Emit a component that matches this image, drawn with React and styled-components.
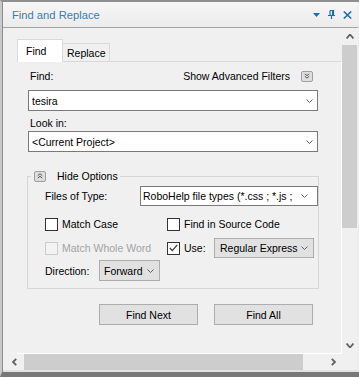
import React from 'react';
import styled, { createGlobalStyle } from 'styled-components';

const GlobalStyle = createGlobalStyle`
  html, body { margin: 0; padding: 0; }
  body {
    font-family: "Liberation Sans", Arial, sans-serif;
    font-size: 10.5px;
    color: #000;
    background: #fff;
  }
`;

const Window = styled.div`
  width: 359px;
  height: 377px;
  box-sizing: border-box;
  display: flex;
  flex-direction: column;
  background: #f0f0f0;
  border-top: 2px solid #8e8e8e;
  border-left: 2px solid #c9c9c9;
  border-bottom: 5px solid #787878;
  overflow: hidden;
`;

const Frame = styled.div`
  flex: 1;
  min-height: 0;
  display: flex;
  flex-direction: column;
  border-left: 1px solid #8c8c8c;
  border-right: 1px solid #ececec;
`;

const TitleBar = styled.div`
  height: 25px;
  flex: none;
  display: flex;
  align-items: center;
  padding: 0 6px 0 9px;
  background: linear-gradient(#f7f7f7, #ebebeb);
  border-bottom: 1px solid #a3a3a3;
`;

const Title = styled.div`
  flex: 1;
  font-size: 11.2px;
  color: #3a7cb2;
`;

const TitleIcons = styled.div`
  display: flex;
  align-items: center;
  gap: 8px;
`;

const Body = styled.div`
  flex: 1;
  min-height: 0;
  display: flex;
`;

const Viewport = styled.div`
  flex: 1;
  min-width: 0;
  display: flex;
  flex-direction: column;
  padding: 11px 0 0 14px;
  overflow: hidden;
`;

const Tabs = styled.div`
  display: flex;
  align-items: flex-end;
  position: relative;
  z-index: 1;
`;

const Tab = styled.div`
  box-sizing: border-box;
  width: ${p => (p.$active ? 46 : 47)}px;
  height: ${p => (p.$active ? 23 : 18)}px;
  margin-bottom: ${p => (p.$active ? -1 : 0)}px;
  display: flex;
  align-items: center;
  padding-left: ${p => (p.$active ? 8 : 4)}px;
  background: ${p => (p.$active ? '#fff' : '#f0f0f0')};
  border: 1px solid #d9d9d9;
  border-bottom: none;
  ${p => !p.$active && 'border-left: none;'}
`;

const Panel = styled.div`
  flex: 1;
  display: flex;
  flex-direction: column;
  padding: 6px 23px 0 11px;
  border-top: 1px solid #d9d9d9;
  border-right: 1px solid #fff;
  border-bottom: 1px solid #fff;
`;

const LabelRow = styled.div`
  height: 16px;
  margin-top: ${p => p.$gap || 0}px;
  display: flex;
  align-items: center;
  padding-left: 2px;
`;

const Spacer = styled.div`
  flex: 1;
`;

const AdvancedLabel = styled.span`
  margin-right: 11px;
`;

const MiniToggle = styled.div`
  box-sizing: border-box;
  width: 12px;
  height: 11px;
  margin-right: ${p => p.$right || 0}px;
  display: flex;
  align-items: center;
  justify-content: center;
  background: #dedede;
  border: 1px solid #9f9f9f;
  border-radius: 2px;
`;

const Combo = styled.div`
  box-sizing: border-box;
  width: ${p => p.$width}px;
  height: ${p => p.$height || 21}px;
  margin-top: ${p => p.$gap || 0}px;
  flex: none;
  display: flex;
  align-items: center;
  padding-left: ${p => p.$pad || 3}px;
  padding-right: ${p => p.$chevronGap || 4}px;
  background: ${p => (p.$flat ? '#e1e1e1' : '#fff')};
  border: 1px solid ${p => (p.$flat ? '#adadad' : '#7a7a7a')};
`;

const ComboText = styled.span`
  flex: 1;
  min-width: 0;
  overflow: hidden;
  white-space: nowrap;
`;

const Group = styled.fieldset`
  box-sizing: border-box;
  width: 292px;
  margin: 18px 0 0 -1px;
  padding: 4px 0 7px 3px;
  min-inline-size: 0;
  border: 1px solid #d6d6d6;
`;

const Legend = styled.legend`
  display: flex;
  align-items: center;
  gap: 11px;
  height: 12px;
  padding: 0 2px 0 3px;
`;

const GroupBody = styled.div`
  padding-left: 14px;
  display: flex;
  flex-direction: column;
`;

const OptionRow = styled.div`
  height: ${p => p.$height || 20}px;
  margin-top: ${p => p.$gap || 0}px;
  display: flex;
  align-items: center;
`;

const FieldLabel = styled.span`
  width: ${p => p.$width}px;
  flex: none;
  color: ${p => (p.$disabled ? '#a3a3a3' : '#000')};
`;

const CheckCell = styled.label`
  width: ${p => p.$width || 'auto'};
  flex: none;
  display: flex;
  align-items: center;
  gap: 4px;
  color: ${p => (p.$disabled ? '#a3a3a3' : '#000')};
`;

const Box = styled.span`
  box-sizing: border-box;
  width: 13px;
  height: 13px;
  flex: none;
  display: flex;
  align-items: center;
  justify-content: center;
  background: ${p => (p.$disabled ? '#f3f3f3' : '#fff')};
  border: 1px solid ${p => (p.$disabled ? '#cccccc' : '#333')};
`;

const Buttons = styled.div`
  display: flex;
  gap: 16px;
  margin-top: 15px;
  padding-left: 71px;
`;

const Button = styled.div`
  box-sizing: border-box;
  width: 99px;
  height: 21px;
  display: flex;
  align-items: center;
  justify-content: center;
  background: #e1e1e1;
  border: 1px solid #adadad;
`;

const VScroll = styled.div`
  width: 16px;
  flex: none;
  display: flex;
  flex-direction: column;
  background: #f0f0f0;
`;

const ScrollButton = styled.div`
  width: ${p => p.$w || 16}px;
  height: ${p => p.$h || 16}px;
  flex: none;
  display: flex;
  align-items: center;
  justify-content: center;
  padding-left: ${p => p.$shift || 0}px;
  box-sizing: border-box;
`;

const VThumb = styled.div`
  height: 183px;
  margin-right: 1px;
  background: #cdcdcd;
`;

const Track = styled.div`
  flex: 1;
`;

const HScrollRow = styled.div`
  height: 16px;
  flex: none;
  display: flex;
  border-bottom: 2px solid #e2e2e2;
`;

const HScroll = styled.div`
  flex: 1;
  display: flex;
`;

const HThumb = styled.div`
  width: 279px;
  background: #cdcdcd;
`;

const Corner = styled.div`
  width: 16px;
`;

const Chevron = ({ dir = 'down', color = '#606060', w = 7, h = 4, sw = 1 }) => {
  const paths = {
    down: `M0.5 0.5L${w / 2} ${h - 0.5}L${w - 0.5} 0.5`,
    up: `M0.5 ${h - 0.5}L${w / 2} 0.5L${w - 0.5} ${h - 0.5}`,
  };
  return (
    <svg width={w} height={h} viewBox={`0 0 ${w} ${h}`}>
      <path d={paths[dir]} fill="none" stroke={color} strokeWidth={sw} />
    </svg>
  );
};

const SideChevron = ({ dir }) => (
  <svg width="5" height="8" viewBox="0 0 5 8">
    <path
      d={dir === 'left' ? 'M4.2 0.8L1 4L4.2 7.2' : 'M0.8 0.8L4 4L0.8 7.2'}
      fill="none"
      stroke="#606060"
      strokeWidth="1.8"
    />
  </svg>
);

const DoubleChevron = ({ dir }) => (
  <svg width="6" height="6" viewBox="0 0 6 6">
    {dir === 'down' ? (
      <path d="M0.8 0.8L3 2.6L5.2 0.8M0.8 3.3L3 5.1L5.2 3.3" fill="none" stroke="#555" strokeWidth="1" />
    ) : (
      <path d="M0.8 2.6L3 0.8L5.2 2.6M0.8 5.1L3 3.3L5.2 5.1" fill="none" stroke="#555" strokeWidth="1" />
    )}
  </svg>
);

const Check = () => (
  <svg width="9" height="8" viewBox="0 0 9 8">
    <path d="M0.8 4L3.3 6.6L8.3 0.8" fill="none" stroke="#333" strokeWidth="1.2" />
  </svg>
);

const DropIcon = () => (
  <svg width="7" height="4" viewBox="0 0 7 4">
    <path d="M0 0H7L3.5 4Z" fill="#236ea8" />
  </svg>
);

const PinIcon = () => (
  <svg width="7" height="9" viewBox="0 0 7 9">
    <path d="M2 0.5H5.5V5.5M2 0.5V5.5M0 5.5H7M3.5 5.5V9" fill="none" stroke="#236ea8" strokeWidth="1.2" />
    <path d="M4.6 0.5V5.5" stroke="#236ea8" strokeWidth="1.4" />
  </svg>
);

const CloseIcon = () => (
  <svg width="9" height="8" viewBox="0 0 9 8">
    <path d="M0.8 0.5L8.2 7.5M8.2 0.5L0.8 7.5" fill="none" stroke="#236ea8" strokeWidth="1.6" />
  </svg>
);

const Select = ({ children, ...rest }) => (
  <Combo {...rest}>
    <ComboText>{children}</ComboText>
    <Chevron />
  </Combo>
);

const Checkbox = ({ checked, disabled, width, children }) => (
  <CheckCell $width={width} $disabled={disabled}>
    <Box $disabled={disabled}>{checked && <Check />}</Box>
    {children}
  </CheckCell>
);

export default function App() {
  return (
    <>
      <GlobalStyle />
      <Window>
        <Frame>
          <TitleBar>
            <Title>Find and Replace</Title>
            <TitleIcons>
              <DropIcon />
              <PinIcon />
              <CloseIcon />
            </TitleIcons>
          </TitleBar>
          <Body>
            <Viewport>
              <Tabs>
                <Tab $active>Find</Tab>
                <Tab>Replace</Tab>
              </Tabs>
              <Panel>
                <LabelRow>
                  <span>Find:</span>
                  <Spacer />
                  <AdvancedLabel>Show Advanced Filters</AdvancedLabel>
                  <MiniToggle $right={5}>
                    <DoubleChevron dir="down" />
                  </MiniToggle>
                </LabelRow>
                <Select $width={290} $gap={6}>tesira</Select>
                <LabelRow $gap={4}>Look in:</LabelRow>
                <Select $width={290}>&lt;Current Project&gt;</Select>

                <Group>
                  <Legend>
                    <MiniToggle>
                      <DoubleChevron dir="up" />
                    </MiniToggle>
                    Hide Options
                  </Legend>
                  <GroupBody>
                    <OptionRow>
                      <FieldLabel $width={95}>Files of Type:</FieldLabel>
                      <Select $width={178} $height={20} $pad={2} $chevronGap={9}>
                        RoboHelp file types (*.css ; *.js ;
                      </Select>
                    </OptionRow>
                    <OptionRow $gap={8}>
                      <Checkbox width="122px">Match Case</Checkbox>
                      <Checkbox>Find in Source Code</Checkbox>
                    </OptionRow>
                    <OptionRow $gap={4}>
                      <Checkbox width="122px" disabled>Match Whole Word</Checkbox>
                      <Checkbox checked>
                        <FieldLabel $width={30}>Use:</FieldLabel>
                      </Checkbox>
                      <Select $flat $width={100} $height={20} $pad={5} $chevronGap={5}>
                        Regular Express
                      </Select>
                    </OptionRow>
                    <OptionRow $gap={2} $height={21}>
                      <FieldLabel $width={54}>Direction:</FieldLabel>
                      <Select $flat $width={61} $pad={4} $chevronGap={5}>Forward</Select>
                    </OptionRow>
                  </GroupBody>
                </Group>

                <Buttons>
                  <Button>Find Next</Button>
                  <Button>Find All</Button>
                </Buttons>
              </Panel>
            </Viewport>
            <VScroll>
              <ScrollButton $h={17}>
                <Chevron dir="up" sw={1.8} w={8} h={5} />
              </ScrollButton>
              <VThumb />
              <Track />
              <ScrollButton $h={17}>
                <Chevron dir="down" sw={1.8} w={8} h={5} />
              </ScrollButton>
            </VScroll>
          </Body>
          <HScrollRow>
            <HScroll>
              <ScrollButton $w={21} $shift={2}>
                <SideChevron dir="left" />
              </ScrollButton>
              <HThumb />
              <Track />
              <ScrollButton $w={17}>
                <SideChevron dir="right" />
              </ScrollButton>
            </HScroll>
            <Corner />
          </HScrollRow>
        </Frame>
      </Window>
    </>
  );
}
